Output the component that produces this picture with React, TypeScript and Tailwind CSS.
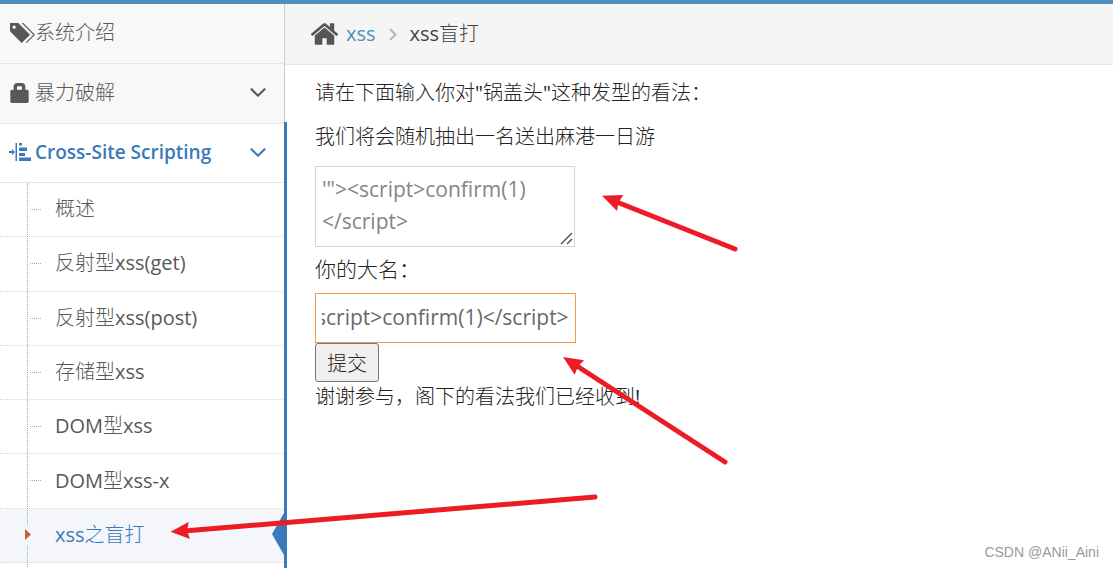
import { useEffect, useRef, type ReactNode } from "react";

function TagsIcon() {
  return (
    <svg viewBox="0 0 1501 1200" className="h-5 w-[25px] shrink-0" fill="currentColor" aria-hidden="true">
      <g transform="matrix(1 0 0 -1 0 1200)">
        <path d="M2 700v475q0 11 7 18t18 7h474l700 -700l-500 -500zM148 953q0 -42 30 -71q29 -30 71 -30t71 30q30 29 30 71t-30 71q-29 30 -71 30t-71 -30q-30 -29 -30 -71zM701 1200h100l700 -700l-500 -500l-50 50l450 450z" />
      </g>
    </svg>
  );
}

function LockIcon() {
  return (
    <svg viewBox="0 0 1100 1200" className="h-5 w-[19px] shrink-0" fill="currentColor" aria-hidden="true">
      <g transform="matrix(1 0 0 -1 0 1200)">
        <path d="M900 800v200q0 83 -58.5 141.5t-141.5 58.5h-300q-82 0 -141 -59t-59 -141v-200h-100q-41 0 -70.5 -29.5t-29.5 -70.5v-600q0 -41 29.5 -70.5t70.5 -29.5h900q41 0 70.5 29.5t29.5 70.5v600q0 41 -29.5 70.5t-70.5 29.5h-100zM400 800v150q0 21 15 35.5t35 14.5h200q20 0 35 -14.5t15 -35.5v-150h-300z" />
      </g>
    </svg>
  );
}

function AlignIcon() {
  return (
    <svg viewBox="0 0 22 20" className="-ml-px h-5 w-[22px] shrink-0" fill="currentColor" aria-hidden="true">
      <path d="M0 9h3V7l3 3-3 3v-2H0zM6.500 1h1.500v18H6.500zM10 1h3v2.500h-3zM10 5.500h8v3.500h-8zM10 11h6v3h-6zM10 15.500h12v3.500H10z" />
    </svg>
  );
}

function HomeIcon() {
  return (
    <svg viewBox="96 256 1600 1280" className="h-[22px] w-[27px] shrink-0 text-[#555]" fill="currentColor" aria-hidden="true">
      <path d="M1472 992v480q0 26-19 45t-45 19h-384v-384h-256v384h-384q-26 0-45-19t-19-45v-480q0-1 .5-3t.5-3l575-474 575 474q1 2 1 6zm223-69l-62 74q-8 9-21 11h-3q-13 0-21-7l-692-577-692 577q-12 8-24 7-13-2-21-11l-62-74q-8-10-7-23.5t11-21.5l719-599q32-26 76-26t76 26l244 204v-195q0-14 9-23t23-9h192q14 0 23 9t9 23v408l219 182q10 8 11 21.5t-7 23.5z" />
    </svg>
  );
}

function AngleDown() {
  return (
    <svg viewBox="397 653 998 582" className="ml-auto h-[9px] w-4 shrink-0" fill="currentColor" aria-hidden="true">
      <path d="M1395 736q0 13-10 23l-466 466q-10 10-23 10t-23-10l-466-466q-10-10-10-23t10-23l50-50q10-10 23-10t23 10l393 393 393-393q10-10 23-10t23 10l50 50q10 10 10 23z" />
    </svg>
  );
}

function MenuLink({ icon, label, expandable, active }: { icon: ReactNode; label: string; expandable?: boolean; active?: boolean }) {
  return (
    <a
      href="#"
      className={
        active
          ? "flex h-[58px] items-center bg-white pr-[18px] pb-[2px] pl-[10px] text-[19px] font-semibold text-[#3a7ab8]"
          : "flex h-[59px] items-center bg-[#f8f8f8] pr-[18px] pb-[2px] pl-[10px] text-[#585858]"
      }
    >
      <span className="flex w-[25px] shrink-0">{icon}</span>
      <span>{label}</span>
      {expandable && <AngleDown />}
    </a>
  );
}

const subItems = ["概述", "反射型xss(get)", "反射型xss(post)", "存储型xss", "DOM型xss", "DOM型xss-x", "xss之盲打"];
const current = "xss之盲打";
const payload = "'\"><script>confirm(1)</script>";

function SubItem({ label }: { label: string }) {
  const isCurrent = label === current;
  return (
    <li className={isCurrent ? "relative border-b border-dotted border-[#d8d8d8] bg-[#f4f6fb]" : "relative border-b border-dotted border-[#d8d8d8]"}>
      <a href="#" className={isCurrent ? "flex h-full items-center pb-px pl-[55px] text-[#3a7ab8]" : "flex h-full items-center pb-px pl-[55px] text-[#585858]"}>
        {label}
      </a>
      {isCurrent ? (
        <>
          <span className="absolute top-1/2 left-[24px] z-10 h-5 w-2 -translate-y-1/2 bg-[#f4f6fb]" />
          <svg viewBox="0 0 6 11" className="absolute top-5 left-[25px] z-10 h-[11px] w-[6px]" aria-hidden="true">
            <path d="M0 0 6 5.500 0 11z" fill="#c86139" />
          </svg>
          <svg viewBox="0 0 12 42" className="absolute top-1 right-0 h-[42px] w-3" aria-hidden="true">
            <path d="M12 0 0 21 12 42z" fill="#3a7ab8" />
          </svg>
        </>
      ) : (
        <span className="absolute top-[26px] left-[30px] w-[11px] border-t border-dotted border-[#8fb3d0]" />
      )}
    </li>
  );
}

function Sidebar() {
  return (
    <nav className="w-[285px] shrink-0 border-r border-[#ccc] bg-white" aria-label="菜单">
      <ul>
        <li className="border-b border-[#e5e5e5]">
          <MenuLink icon={<TagsIcon />} label="系统介绍" />
        </li>
        <li className="border-b border-[#e5e5e5]">
          <MenuLink icon={<LockIcon />} label="暴力破解" expandable />
        </li>
        <li className="relative">
          <MenuLink icon={<AlignIcon />} label="Cross-Site Scripting" expandable active />
          <ul className="relative grid h-[381px] auto-rows-fr border-t border-[#e5e5e5]">
            {subItems.map((s) => (
              <SubItem key={s} label={s} />
            ))}
            <li className="absolute top-0 left-[27px] -bottom-6 border-l border-dotted border-[#8fb3d0]" aria-hidden="true" />
          </ul>
          <div className="absolute -top-[2px] -right-[3px] -bottom-10 w-[3px] bg-[#3a7ab8]" />
        </li>
      </ul>
    </nav>
  );
}

function Breadcrumb() {
  return (
    <nav className="flex h-[61px] items-center border-b border-[#e5e5e5] bg-[#f5f5f5] pl-[26px] text-[#444]" aria-label="位置">
      <HomeIcon />
      <a href="#" className="ml-2 text-[#4c8fbd]">
        xss
      </a>
      <svg viewBox="0 0 8 13" className="mx-[13px] h-[13px] w-2" fill="none" stroke="#b2b6bf" strokeWidth="2" aria-hidden="true">
        <path d="M1 1 6.500 6.500 1 12" />
      </svg>
      <span>xss盲打</span>
    </nav>
  );
}

function FeedbackForm() {
  const nameRef = useRef<HTMLInputElement>(null);
  useEffect(() => {
    const el = nameRef.current;
    if (el) el.scrollLeft = el.scrollWidth;
  }, []);
  return (
    <form className="flex flex-col items-start pt-[13px] pl-[30px] leading-[29px] text-[#222]" onSubmit={(e) => e.preventDefault()}>
      <label htmlFor="content" className="mb-[15px]">
        请在下面输入你对"锅盖头"这种发型的看法：
      </label>
      <p className="mb-[15px]">我们将会随机抽出一名送出麻港一日游</p>
      <div className="relative mb-2 flex">
        <textarea
          id="content"
          defaultValue={payload}
          className="h-[81px] w-[260px] resize-none overflow-hidden border border-[#d5d5d5] px-[6px] py-[6px] text-[21px] leading-8 text-[#858585] outline-none"
        />
        <svg viewBox="0 0 13 13" className="absolute right-[2px] bottom-[2px] h-[13px] w-[13px]" stroke="#555" strokeWidth="1.5" aria-hidden="true">
          <path d="M1 12 12 1M7 12l5-5" />
        </svg>
      </div>
      <label htmlFor="name" className="mb-[9px] text-[21px]">
        你的大名：
      </label>
      <input
        id="name"
        ref={nameRef}
        type="text"
        defaultValue={payload}
        className="h-[50px] w-[261px] border border-[#f59942] px-[6px] pb-[2px] text-[21px] text-[#696969] outline-none"
      />
      <button type="submit" className="h-[39px] rounded-[3px] border border-[#767676] bg-[#efefef] px-[11px] pt-px">
        提交
      </button>
      <p>谢谢参与，阁下的看法我们已经收到!</p>
    </form>
  );
}

function Arrows() {
  return (
    <svg viewBox="0 0 760 568" className="pointer-events-none absolute top-0 left-0 z-20 h-[568px] w-[760px]" fill="#ed1c24" stroke="#ed1c24" aria-hidden="true">
      <g strokeWidth="5" strokeLinecap="round">
        <path d="M618 202.500 735 249" />
        <path d="M577 366 725 462" />
        <path d="M187 530.700 595 497" />
      </g>
      <g stroke="none">
        <path d="M602 195.700 623.300 195 618.500 202.500 617 211z" />
        <path d="M563 357 584 360.300 578 366.500 574.700 374.700z" />
        <path d="M170.500 531.700 188.700 522 187 530.700 190 539z" />
      </g>
    </svg>
  );
}

export default function App() {
  return (
    <div className="relative flex min-h-screen flex-col overflow-hidden bg-white font-['Open_Sans','Noto_Sans_CJK_SC_Light','Noto_Sans_CJK_SC',sans-serif] text-[20px]">
      <div className="h-1 shrink-0 bg-[#4c8fbd]" />
      <div className="flex min-h-0 flex-1">
        <Sidebar />
        <main className="min-w-0 flex-1">
          <Breadcrumb />
          <FeedbackForm />
        </main>
      </div>
      <Arrows />
      <div className="absolute right-[14px] bottom-[5px] font-['Liberation_Sans',sans-serif] text-[14px] text-[#999]">CSDN @ANii_Aini</div>
    </div>
  );
}
